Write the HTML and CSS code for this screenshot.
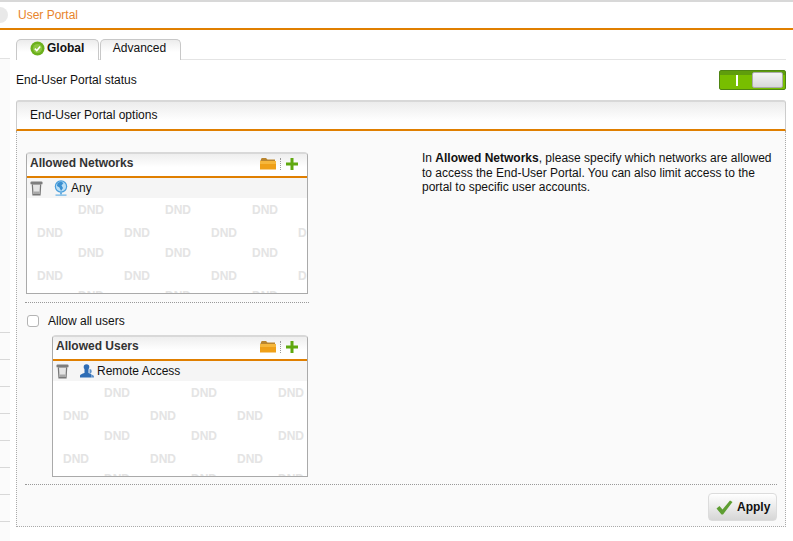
FILE: index.html
```html
<!DOCTYPE html>
<html lang="en">
<head>
<meta charset="utf-8">
<title>User Portal</title>
<link rel="stylesheet" href="styles.css">
</head>
<body>
<div class="top-strip"></div>
<header class="header"><span class="header-dot"></span><span class="header-title">User Portal</span></header>
<div class="main">
  <aside class="sidebar">
    <div class="side-spacer"></div>
    <div class="side-gap"></div>
    <div class="side-line"></div><div class="side-line"></div><div class="side-line"></div><div class="side-line"></div>
    <div class="side-line"></div><div class="side-line"></div><div class="side-line"></div>
  </aside>
  <main class="content">
    <nav class="tabs">
      <div class="tab tab-active">
        <svg class="tab-icon" width="15" height="15" viewBox="0 0 15 15"><circle cx="7.500" cy="7.500" r="7" fill="#6cb01c"/><circle cx="7.500" cy="7.500" r="4.600" fill="#8cc63f"/><path d="M4.800 7.600l2 2 3.400-4" fill="none" stroke="#fff" stroke-width="1.500"/></svg>
        <span>Global</span>
      </div>
      <div class="tab">Advanced</div>
    </nav>
    <div class="status-row">
      <span>End-User Portal status</span>
      <div class="toggle"><span class="toggle-bar"></span><span class="toggle-knob"></span></div>
    </div>
    <section class="panel">
      <div class="panel-head">End-User Portal options</div>
      <div class="panel-body">
        <div class="columns">
          <div class="left-col">
            <div class="box box-net">
              <div class="box-head">
                <span class="box-title">Allowed Networks</span>
                <svg class="folder" width="16" height="13" viewBox="0 0 16 13"><path d="M1 2.500Q1 1 2 1h4l1.500 1.500H15v2H0z" fill="#b9852f"/><path d="M0 4h16v8.500H0z" fill="#efa018"/><path d="M0 4h16v3H0z" fill="#f6b73c"/></svg>
                <span class="sep"></span>
                <svg class="plus" width="12" height="12" viewBox="0 0 12 12"><path d="M4.500 0h3v4.500H12v3H7.500V12h-3V7.500H0v-3h4.500z" fill="#5fa80f"/></svg>
              </div>
              <div class="box-row">
                <svg class="trash" width="13" height="15" viewBox="0 0 13 15"><path d="M0.500 1.500Q0.500 0.500 1.500 0.500h10Q12.500 0.500 12.500 1.500V3.200H0.500z" fill="#7d7d7d"/><path d="M1.700 3.200h9.600L10.600 14.500H2.400z" fill="#777"/><path d="M3 3.800h7L9.500 13H3.500z" fill="#e4e4e4"/><path d="M3.400 10.500h6.200L9.500 13H3.500z" fill="#a8a8a8"/></svg>
                <svg class="globe" width="14" height="16" viewBox="0 0 14 16"><circle cx="7" cy="6.500" r="6.200" fill="#4a9fdc"/><circle cx="7" cy="6.500" r="5" fill="#bcdff5"/><path d="M3.500 3l3.500-1.500 2.500 1.500-2 2.500 1.500 2.500-2 3-1.500-3.500-2.500-1.500z" fill="#3a8fd0"/><path d="M7 12.500v2" stroke="#4a9fdc" stroke-width="1.600"/><path d="M1.500 15.200h11" stroke="#6fb4e4" stroke-width="1.300"/></svg>
                <span class="row-text">Any</span>
              </div>
              <div class="dnd">
                <div class="dnd-row dnd-a"><span>DND</span><span>DND</span><span>DND</span></div>
                <div class="dnd-row dnd-b"><span>DND</span><span>DND</span><span>DND</span><span>DND</span></div>
                <div class="dnd-row dnd-a"><span>DND</span><span>DND</span><span>DND</span></div>
                <div class="dnd-row dnd-b"><span>DND</span><span>DND</span><span>DND</span><span>DND</span></div>
                <div class="dnd-row dnd-a"><span>DND</span><span>DND</span><span>DND</span></div>
              </div>
            </div>
            <div class="divider divider-short"></div>
            <label class="check-row"><span class="checkbox"></span><span>Allow all users</span></label>
            <div class="box box-users">
              <div class="box-head">
                <span class="box-title">Allowed Users</span>
                <svg class="folder" width="16" height="13" viewBox="0 0 16 13"><path d="M1 2.500Q1 1 2 1h4l1.500 1.500H15v2H0z" fill="#b9852f"/><path d="M0 4h16v8.500H0z" fill="#efa018"/><path d="M0 4h16v3H0z" fill="#f6b73c"/></svg>
                <span class="sep"></span>
                <svg class="plus" width="12" height="12" viewBox="0 0 12 12"><path d="M4.500 0h3v4.500H12v3H7.500V12h-3V7.500H0v-3h4.500z" fill="#5fa80f"/></svg>
              </div>
              <div class="box-row">
                <svg class="trash" width="13" height="15" viewBox="0 0 13 15"><path d="M0.500 1.500Q0.500 0.500 1.500 0.500h10Q12.500 0.500 12.500 1.500V3.200H0.500z" fill="#7d7d7d"/><path d="M1.700 3.200h9.600L10.600 14.500H2.400z" fill="#777"/><path d="M3 3.800h7L9.500 13H3.500z" fill="#e4e4e4"/><path d="M3.400 10.500h6.200L9.500 13H3.500z" fill="#a8a8a8"/></svg>
                <svg class="users" width="14" height="14" viewBox="0 0 14 14"><circle cx="6.500" cy="3" r="2.800" fill="#2f6db5"/><path d="M0 13.500V11.500Q0.500 10 4.500 9V5h4v4q2 0.500 3 1.500V13.500z" fill="#2f6db5"/><path d="M9.500 5a2.200 2.200 0 0 1 0 4.500L9 10Q13.500 10.500 14 12.500V13.500H11.500V10.500L9.500 9z" fill="#5b8fc9"/></svg>
                <span class="row-text">Remote Access</span>
              </div>
              <div class="dnd">
                <div class="dnd-row dnd-a"><span>DND</span><span>DND</span><span>DND</span></div>
                <div class="dnd-row dnd-b"><span>DND</span><span>DND</span><span>DND</span></div>
                <div class="dnd-row dnd-a"><span>DND</span><span>DND</span><span>DND</span></div>
                <div class="dnd-row dnd-b"><span>DND</span><span>DND</span><span>DND</span></div>
                <div class="dnd-row dnd-a"><span>DND</span><span>DND</span><span>DND</span></div>
              </div>
            </div>
          </div>
          <p class="help">In <b>Allowed Networks</b>, please specify which networks are allowed to access the End-User Portal. You can also limit access to the portal to specific user accounts.</p>
        </div>
        <div class="divider divider-wide"></div>
        <div class="footer">
          <button class="apply" type="button">
            <svg width="17" height="15" viewBox="0 0 17 15"><path d="M0.500 8.500l3-2.500 3 3.500L14 0.500l2.500 1.500L7 14.500H5.500z" fill="#5e9e32"/></svg>
            <span>Apply</span>
          </button>
        </div>
      </div>
    </section>
  </main>
</div>
</body>
</html>
```

FILE: styles.css
```css
* { box-sizing: border-box; }
html, body { margin: 0; padding: 0; }
body {
  width: 793px;
  height: 541px;
  overflow: hidden;
  background: #fff;
  color: #111;
  font: 12px/14.5px "Liberation Sans", Arial, sans-serif;
}
.top-strip { height: 2px; background: #d8d8d8; }
.header {
  height: 28px;
  display: flex;
  align-items: center;
  gap: 10px;
  border-bottom: 2px solid #e07f00;
}
.header-dot {
  width: 16px;
  height: 16px;
  margin-left: -8px;
  border-radius: 50%;
  background: #e9e9e9;
}
.header-title { color: #e8842a; }
.main { display: flex; height: 511px; }
.sidebar { width: 10px; flex: none; background: #fbfbfb; }
.side-spacer { height: 29px; background: #fff; border-bottom: 1px solid #e2e2e2; }
.side-gap { height: 274px; border-bottom: 1px solid #d8d8d8; }
.side-line { height: 27px; border-bottom: 1px solid #d8d8d8; }
.content { width: 776px; padding-left: 6px; flex: none; }
.tabs {
  display: flex;
  gap: 1px;
  height: 30px;
  padding-top: 9px;
  border-bottom: 1px solid #e4e4e4;
}
.tab {
  width: 81px;
  height: 21px;
  display: flex;
  align-items: center;
  justify-content: center;
  padding: 0 2px 3px 0;
  border: 1px solid #c8c8c8;
  border-bottom: 0;
  border-radius: 5px 5px 0 0;
  background: linear-gradient(#ececec, #fff 60%);
}
.tab-active {
  width: 83px;
  gap: 2px;
  justify-content: flex-start;
  padding-left: 13px;
  font-weight: bold;
}
.status-row {
  display: flex;
  justify-content: space-between;
  align-items: center;
  height: 40px;
}
.toggle {
  width: 67px;
  height: 20px;
  display: flex;
  align-items: center;
  justify-content: space-between;
  padding: 0 2px 0 16px;
  border: 1px solid #4f8512;
  border-radius: 2px;
  background: linear-gradient(#5f9d0c 0 4px, #78be00 4px);
}
.toggle-bar { width: 2px; height: 11px; background: #fff; }
.toggle-knob {
  width: 31px;
  height: 16px;
  border: 1px solid #aaa;
  border-radius: 2px;
  background: linear-gradient(#f4f4f4, #d8d8d8);
}
.panel {
  width: 770px;
  height: 427px;
}
.panel-head {
  height: 31px;
  padding: 5px 13px 0;
  line-height: 16px;
  border: 1px solid #ccc;
  border-top: 2px solid #d8d8d8;
  border-bottom: 2px solid #e07f00;
  border-radius: 3px 3px 0 0;
  background: linear-gradient(#ececec, #fff 70%);
}
.panel-body {
  height: 396px;
  padding: 19px 8px 0;
  background: #fafafa;
  border: 1px dotted #aaa;
  border-top: 0;
}
.columns { display: flex; gap: 113px; height: 334px; }
.left-col { width: 284px; flex: none; padding-top: 2px; }
.help { width: 350px; margin: 1px 0 0; }
.box {
  margin-left: 1px;
  width: 282px;
  height: 142px;
  display: flex;
  flex-direction: column;
  overflow: hidden;
  background: #fff;
  border: 1px solid #aaa;
  border-top: 2px solid #d8d8d8;
  border-radius: 4px 4px 0 0;
}
.box-users { margin-left: 27px; width: 256px; }
.box-head {
  height: 24px;
  flex: none;
  display: flex;
  align-items: center;
  padding: 0 9px 3px 3px;
  border-bottom: 2px solid #e07f00;
  background: linear-gradient(#eeeeee, #fff 60%);
}
.box-title { flex: 1; font-weight: bold; color: #333; }
.sep { width: 0; height: 12px; margin: 0 5px 0 4px; border-left: 1px dotted #999; }
.box-row {
  height: 20px;
  flex: none;
  display: flex;
  align-items: center;
  padding-left: 3px;
  background: #f5f5f5;
}
.globe { margin-left: 11px; }
.users { margin-left: 11px; }
.row-text { margin-left: 3px; }
.dnd { flex: 1; overflow: hidden; padding-top: 1px; }
.dnd-row {
  display: flex;
  color: #e4e4e4;
  font-weight: bold;
  white-space: nowrap;
}
.dnd-row span { width: 87px; flex: none; }
.dnd-a { padding-left: 51px; height: 20px; line-height: 23px; }
.dnd-b { padding-left: 10px; height: 23px; line-height: 29px; }
.divider { border-top: 1px dotted #999; }
.divider-short { margin-top: 8px; width: 284px; }
.divider-wide { width: 752px; }
.check-row {
  display: flex;
  align-items: center;
  height: 32px;
  gap: 9px;
  padding: 4px 0 0 2px;
}
.checkbox {
  width: 12px;
  height: 12px;
  background: #fff;
  border: 1px solid #b4b4b4;
  border-radius: 3px;
}
.footer { display: flex; justify-content: flex-end; padding-top: 8px; }
.apply {
  width: 69px;
  height: 28px;
  display: flex;
  align-items: center;
  gap: 4px;
  padding: 0 0 0 7px;
  font: bold 12px "Liberation Sans", Arial, sans-serif;
  color: #111;
  border: 1px solid #dcdcdc;
  border-radius: 4px;
  background: linear-gradient(#fff, #d6d6d6);
}
```
